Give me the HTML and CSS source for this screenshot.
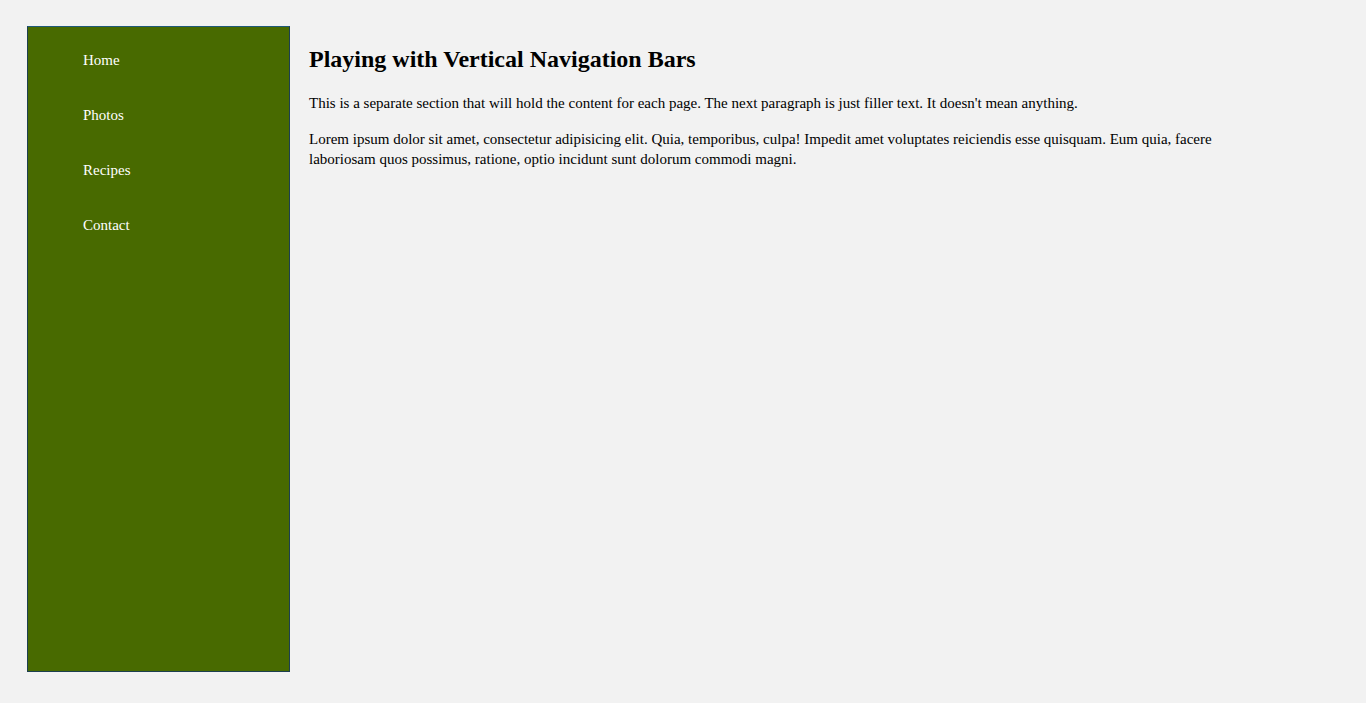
FILE: index.html
```html
<!DOCTYPE html>
<html>
<head>
<meta charset="utf-8">
<link rel="stylesheet" href="styles.css">
</head>
<body>
<div class="page">
  <nav class="sidebar">
    <ul class="nav">
      <li><a href="#">Home</a></li>
      <li><a href="#">Photos</a></li>
      <li><a href="#">Recipes</a></li>
      <li><a href="#">Contact</a></li>
    </ul>
  </nav>
  <main class="content">
    <h2 class="title">Playing with Vertical Navigation Bars</h2>
    <p>This is a separate section that will hold the content for each page. The next paragraph is just filler text. It doesn't mean anything.</p>
    <p>Lorem ipsum dolor sit amet, consectetur adipisicing elit. Quia, temporibus, culpa! Impedit amet voluptates reiciendis esse quisquam. Eum quia, facere laboriosam quos possimus, ratione, optio incidunt sunt dolorum commodi magni.</p>
  </main>
</div>
</body>
</html>
```
FILE: styles.css
```css
html, body {
  margin: 0;
  padding: 0;
  background: #f2f2f2;
  font-family: "Liberation Serif", "Times New Roman", serif;
  font-size: 15px;
  color: #000;
}
.page {
  display: flex;
  align-items: flex-start;
  padding: 26px 27px;
}
.sidebar {
  width: 261px;
  height: 644px;
  flex: none;
  background: #486a00;
  border: 1px solid #1d3f4f;
  border-top-color: #1f5a7a;
}
.nav {
  list-style: none;
  margin: 0;
  padding: 25px 0 0 55px;
}
.nav li {
  height: 55px;
}
.nav a {
  color: #fff;
  text-decoration: none;
  font-size: 15px;
}
.content {
  margin-left: 19px;
  width: 930px;
}
.title {
  font-size: 24px;
  line-height: 28px;
  margin: 19px 0 20px;
}
.content p {
  margin: 0 0 16px;
  line-height: 20px;
}
```
